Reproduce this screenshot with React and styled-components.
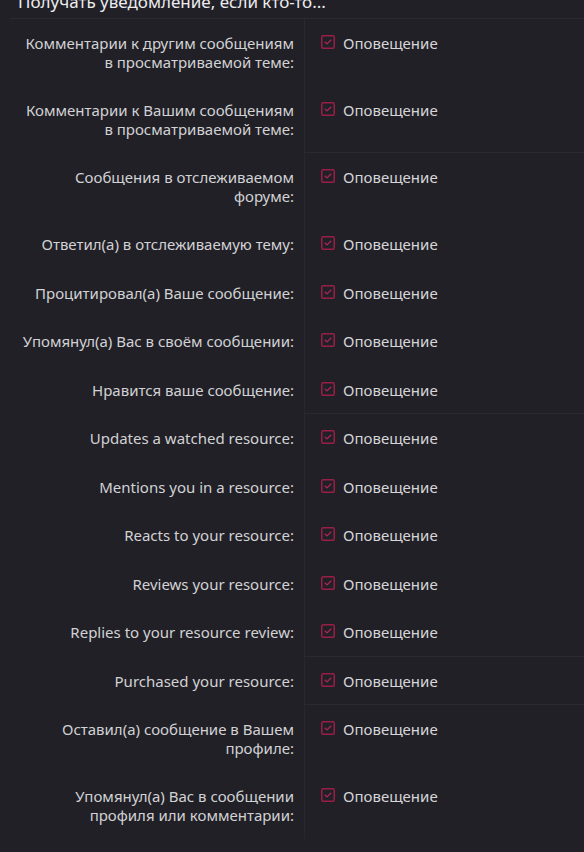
import React from 'react';
import styled, { createGlobalStyle } from 'styled-components';

const GlobalStyle = createGlobalStyle`
  body {
    margin: 0;
    background: #212027;
    font-family: 'Noto Sans', 'Open Sans', sans-serif;
    overflow: hidden;
  }
`;

const Page = styled.div`
  min-height: 100vh;
  background: #212027;
  color: #d4d4d6;
`;

const Header = styled.div`
  margin-left: 10px;
  padding: 0 8px 6px;
  border-bottom: 1px solid #2b2a31;
  h2 {
    margin: -8px 0 0;
    font-size: 17px;
    line-height: 20px;
    font-weight: 400;
    color: #ececee;
  }
`;

const Row = styled.div`
  display: grid;
  grid-template-columns: 304px 1fr;
`;

const Label = styled.div`
  padding: 15px 10px 15px 0;
  text-align: right;
  font-size: 15px;
  line-height: 18.5px;
  color: #d2d2d4;
`;

const Field = styled.div`
  border-left: 1px solid #29282f;
  border-top: ${(p) => (p.$separated ? '1px solid #2b2a31' : '0')};
  margin-top: ${(p) => (p.$separated ? '-1px' : '0')};
  padding: 15px 0 15px 16px;
  font-size: 15px;
  line-height: 18.5px;
`;

const Check = styled.label`
  display: flex;
  align-items: center;
  gap: 8px;
  color: #d6d6d8;
  svg {
    flex: none;
    margin-top: -2px;
  }
`;

const rows = [
  { label: ['Комментарии к другим сообщениям', 'в просматриваемой теме:'] },
  { label: ['Комментарии к Вашим сообщениям', 'в просматриваемой теме:'] },
  { label: ['Сообщения в отслеживаемом', 'форуме:'], separated: true },
  { label: ['Ответил(а) в отслеживаемую тему:'] },
  { label: ['Процитировал(а) Ваше сообщение:'] },
  { label: ['Упомянул(а) Вас в своём сообщении:'] },
  { label: ['Нравится ваше сообщение:'] },
  { label: ['Updates a watched resource:'], separated: true },
  { label: ['Mentions you in a resource:'] },
  { label: ['Reacts to your resource:'] },
  { label: ['Reviews your resource:'] },
  { label: ['Replies to your resource review:'] },
  { label: ['Purchased your resource:'], separated: true },
  { label: ['Оставил(а) сообщение в Вашем', 'профиле:'], separated: true },
  { label: ['Упомянул(а) Вас в сообщении', 'профиля или комментарии:'] },
];

function CheckIcon() {
  return (
    <svg width="14" height="14" viewBox="0 0 14 14">
      <rect x="0.75" y="0.75" width="12.5" height="12.5" rx="1.5" fill="none" stroke="#9a1e46" strokeWidth="1.5" />
      <path d="M3.8 6.8 L6 8.9 L10.2 4.7" fill="none" stroke="#ad2555" strokeWidth="1.3" />
    </svg>
  );
}

export default function App() {
  return (
    <Page>
      <GlobalStyle />
      <Header>
        <h2>Получать уведомление, если кто-то...</h2>
      </Header>
      {rows.map((r, i) => (
        <Row key={i}>
          <Label>
            {r.label.map((l, j) => (
              <div key={j}>{l}</div>
            ))}
          </Label>
          <Field $separated={r.separated}>
            <Check>
              <CheckIcon />
              Оповещение
            </Check>
          </Field>
        </Row>
      ))}
    </Page>
  );
}
